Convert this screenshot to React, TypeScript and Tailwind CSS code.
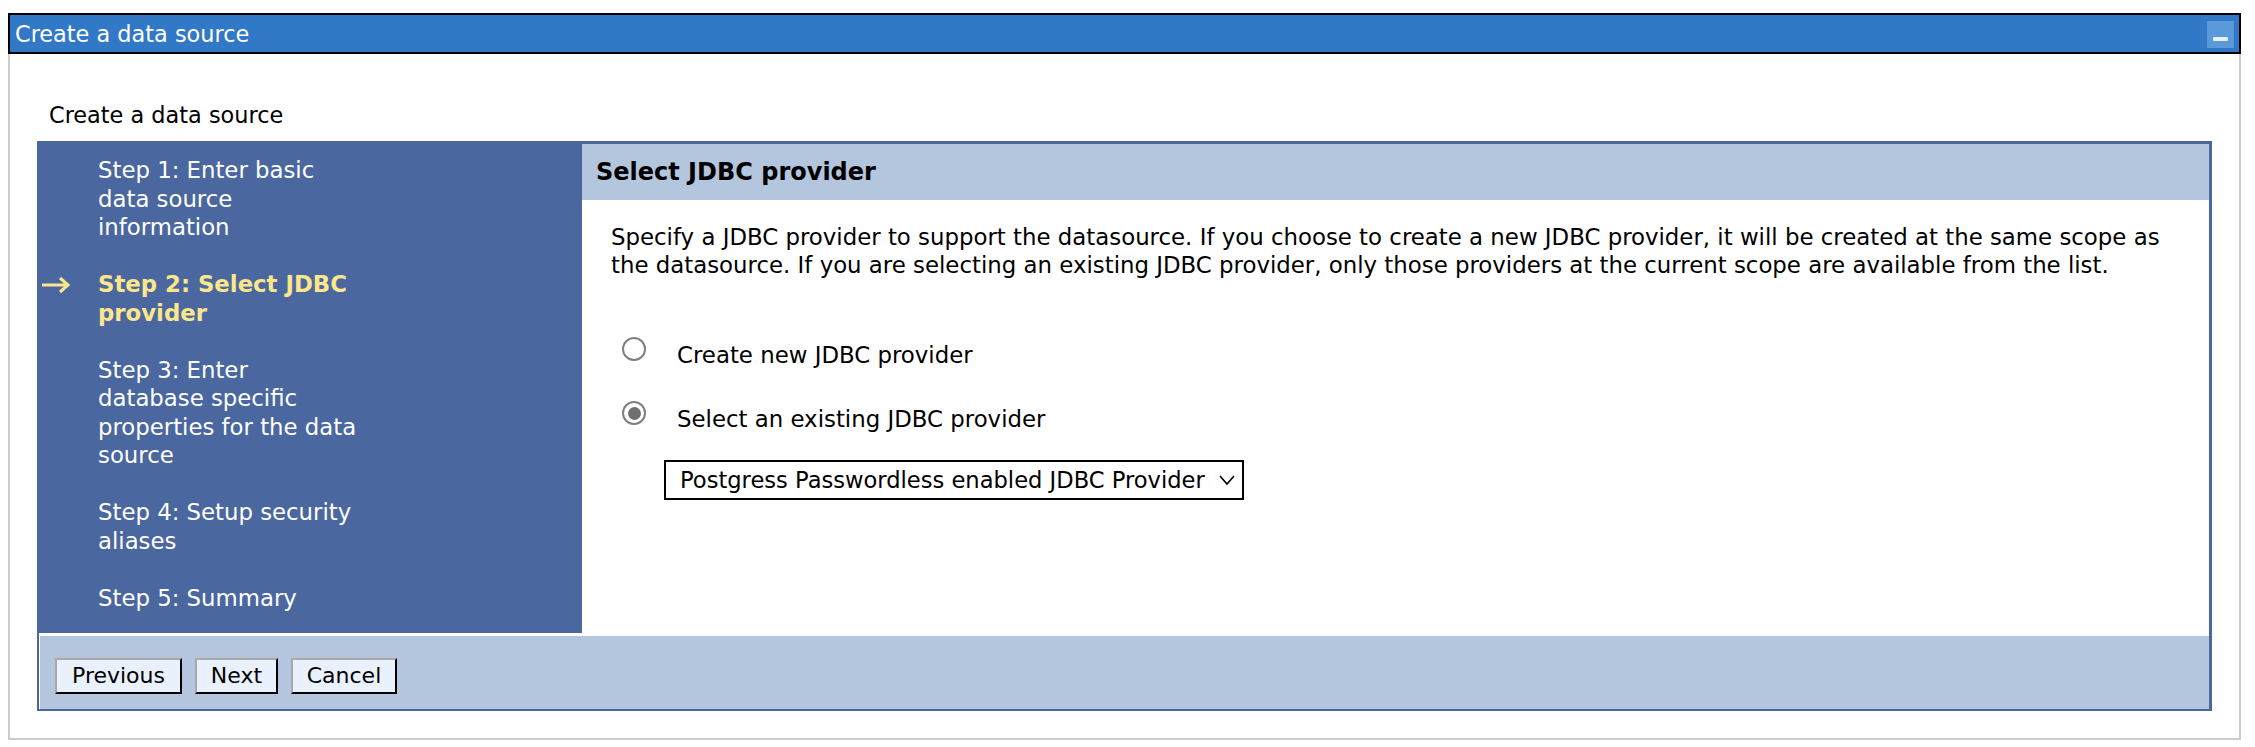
import React from "react";

const steps = [
  { lines: ["Step 1: Enter basic", "data source", "information"] },
  { lines: ["Step 2: Select JDBC", "provider"], current: true },
  { lines: ["Step 3: Enter", "database specific", "properties for the data", "source"] },
  { lines: ["Step 4: Setup security", "aliases"] },
  { lines: ["Step 5: Summary"] },
];

const Arrow = () => (
  <svg width="31" height="20" viewBox="0 0 31 20" className="absolute left-[-58px] top-[5px]">
    <path d="M2 10 H28 M20 3 L28 10 L20 17" fill="none" stroke="#fbe68c" strokeWidth="3" />
  </svg>
);

const NavStep = ({ lines, current }: { lines: string[]; current?: boolean }) => (
  <div className={"relative mb-[28.5px] " + (current ? "font-bold text-[#fbe68c]" : "text-white")}>
    {current && <Arrow />}
    {lines.map(l => (
      <div key={l} className="whitespace-nowrap">
        {l}
      </div>
    ))}
  </div>
);

const Radio = ({ checked }: { checked?: boolean }) => (
  <span className="-mt-[12px] flex h-[24px] w-[24px] shrink-0 items-center justify-center rounded-full border-2 border-[#7f7f7f] bg-white">
    {checked && <span className="h-[13px] w-[13px] rounded-full bg-[#707070]" />}
  </span>
);

const WizButton = ({ label, w }: { label: string; w: string }) => (
  <button
    className={
      "h-[36px] border-2 border-t-[#a8a8a8] border-l-[#a8a8a8] border-r-black border-b-black bg-[#e9f1fd] text-[22px] leading-none text-black " +
      w
    }
  >
    {label}
  </button>
);

export default function App() {
  return (
    <div className="min-h-screen bg-white pt-[13px] pl-[8px] font-['DejaVu_Sans',Verdana,sans-serif]">
      <div className="w-[2233px]">
        {/* title bar */}
        <div className="flex h-[41px] items-center justify-between border-2 border-black bg-[#3178c6] pl-[5px] pr-[5px]">
          <span className="pt-[2px] text-[22.4px] leading-none text-white">Create a data source</span>
          <div className="mt-[2px] flex h-[27px] w-[27px] items-end justify-center bg-[#5a9ad8] pb-[7px]">
            <div className="h-[4px] w-[15px] rounded-[1px] bg-[#e6f0fb]" />
          </div>
        </div>

        {/* body */}
        <div className="border-x-2 border-b-2 border-[#cccccc] px-[27px] pb-[27px]">
          <div className="pl-[12px] pt-[48px] pb-[12px] text-[22.4px] leading-[27px] text-black">
            Create a data source
          </div>

          <div className="border-t-[3px] border-r-[3px] border-b-2 border-l-2 border-[#4a67a0] bg-white">
            <div className="flex h-[489px]">
              {/* left nav */}
              <div className="w-[543px] shrink-0 bg-[#4a67a0] pl-[59px] pt-[12px] text-[22.8px] leading-[28.5px]">
                {steps.map(s => (
                  <NavStep key={s.lines[0]} lines={s.lines} current={s.current} />
                ))}
              </div>

              {/* content */}
              <div className="flex-1">
                <div className="flex h-[56px] items-center bg-[#b4c5de] pl-[14px] text-[24px] font-bold text-black">
                  Select JDBC provider
                </div>
                <div className="pl-[29px] pt-[23px] text-[22.85px] leading-[28px] text-black">
                  <p className="whitespace-nowrap">
                    Specify a JDBC provider to support the datasource. If you choose to create a new JDBC provider, it will be created at the same scope as
                    <br />
                    the datasource. If you are selecting an existing JDBC provider, only those providers at the current scope are available from the list.
                  </p>

                  <div className="mt-[62px] flex flex-col gap-[36px]">
                    <label className="flex h-[28px] items-center gap-[31px] pl-[11px]">
                      <Radio />
                      <span className="whitespace-nowrap">Create new JDBC provider</span>
                    </label>
                    <label className="flex h-[28px] items-center gap-[31px] pl-[11px]">
                      <Radio checked />
                      <span className="whitespace-nowrap">Select an existing JDBC provider</span>
                    </label>
                  </div>

                  <div className="mt-[27px] ml-[53px] flex h-[40px] w-[580px] items-center justify-between border-2 border-black bg-white pl-[14px] pr-[6px]">
                    <span className="whitespace-nowrap text-[22.6px]">Postgress Passwordless enabled JDBC Provider</span>
                    <svg width="18" height="12" viewBox="0 0 18 12">
                      <path d="M2 2 L9 10 L16 2" fill="none" stroke="#000" strokeWidth="1.6" />
                    </svg>
                  </div>
                </div>
              </div>
            </div>

            {/* footer */}
            <div className="flex h-[76px] items-start gap-[13px] border-t-[3px] border-l border-white bg-[#b4c5de] pl-[15px] pt-[22px]">
              <WizButton label="Previous" w="w-[127px]" />
              <WizButton label="Next" w="w-[83px]" />
              <WizButton label="Cancel" w="w-[106px]" />
            </div>
          </div>
        </div>
      </div>
    </div>
  );
}
